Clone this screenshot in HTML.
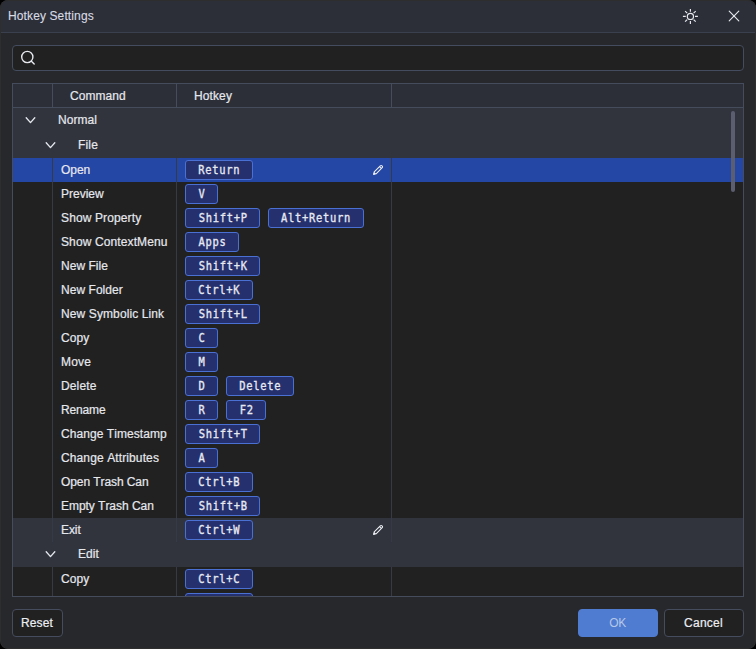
<!DOCTYPE html>
<html><head><meta charset="utf-8"><title>Hotkey Settings</title>
<style>
html,body{margin:0;padding:0;background:#000;}
body{width:756px;height:649px;overflow:hidden;font-family:"Liberation Sans",sans-serif;font-size:12px;color:#e6e8ee;font-kerning:none;-webkit-text-stroke:0.2px;}
#win{position:absolute;left:0;top:0;width:756px;height:649px;background:#27282c;border-radius:8px;overflow:hidden;box-sizing:border-box;}
#lb{position:absolute;left:0;top:0;width:756px;height:649px;box-sizing:border-box;border:1px solid #2e2e2e;border-radius:8px;}
#tb{position:absolute;left:0;top:0;width:756px;height:32px;background:#2c2f37;border-bottom:1px solid #3a404e;}
#title{position:absolute;left:8px;top:9px;line-height:14px;color:#d8dbe4;-webkit-text-stroke:0.1px;}
#sun{position:absolute;left:680px;top:6px;}
#cls{position:absolute;left:724px;top:6px;}
#search{position:absolute;left:12px;top:45px;width:732px;height:26px;box-sizing:border-box;border:1px solid #444d5f;border-radius:4px;background:#212121;}
#search svg{position:absolute;left:6px;top:3px;}
#tbl{position:absolute;left:12px;top:83px;width:732px;height:514px;box-sizing:border-box;border:1px solid #454c5c;background:#212121;overflow:hidden;}
#hd{position:absolute;left:0;top:0;width:730px;height:23px;background:#2c2f37;border-bottom:1px solid #454c5c;}
#hd div{position:absolute;top:0;height:23px;line-height:25px;box-sizing:border-box;border-right:1px solid #454c5c;padding-left:17px;}
#rows{position:absolute;left:0;top:24px;width:730px;}
.r{position:relative;width:730px;height:24px;line-height:24px;white-space:nowrap;}
.g{height:25px;background:#31343d;}
.g span{position:absolute;top:0;}
.g0 span{left:45px;}
.g1 span{left:65px;}
.chev{position:absolute;top:8px;}
.g0 .chev{left:12px;}
.g1 .chev{left:32px;}
.it div{position:absolute;top:0;height:24px;box-sizing:border-box;}
.c0{left:0;width:40px;border-right:1px solid #363a47;}
.c1{left:40px;width:124px;border-right:1px solid #363a47;padding-left:8px;}
.c2{left:164px;width:215px;border-right:1px solid #363a47;padding-left:8px;}
.c3{left:379px;width:351px;}
.sel{background:#2446a4;}
.hov{background:#31343d;}
.k{display:inline-block;vertical-align:top;margin:2px 8px 0 0;height:20px;line-height:18px;box-sizing:border-box;border:1px solid #4a70d4;border-radius:3px;background:#25306e;padding:0 12px;font-family:"DejaVu Sans Mono","Liberation Mono",monospace;font-size:11.6px;color:#e8eaf2;}
.k b{display:inline-block;font-weight:normal;transform:scaleX(0.9);transform-origin:50% 50%;letter-spacing:0.8px;-webkit-text-stroke:0.32px;}
.pen{position:absolute;left:195px;top:6px;}
#sb{position:absolute;left:718px;top:27px;width:4px;height:81px;border-radius:2px;background:#5a5e6f;}
.btn{position:absolute;top:609px;height:28px;line-height:26px;box-sizing:border-box;border:1px solid #454c5e;border-radius:4px;background:#212121;text-align:center;color:#eceef3;padding-right:1px;}
#reset{left:12px;width:51px;}
#ok{left:578px;width:80px;background:#4f7bd0;border-color:#4f7bd0;color:#b4c8e8;-webkit-text-stroke:0;}
#cancel{left:664px;width:80px;}
</style></head><body>
<div id="win">
<div id="tb"><div id="title"><span class="t" style="letter-spacing:0.117px">Hotkey Settings</span></div>
<svg id="sun" width="21" height="21" viewBox="0 0 21 21"><g fill="none" stroke="#e6e8ee" stroke-width="1.2"><circle cx="10.4" cy="10.4" r="3.1"/><path d="M10.4 2.9v2.9M10.4 15V17.9M2.9 10.4h2.9M15 10.4H17.9M5.1 5.1l2.1 2.1M13.6 13.6l2.1 2.1M15.7 5.1l-2.1 2.1M7.2 13.6l-2.1 2.1"/></g></svg>
<svg id="cls" width="20" height="20" viewBox="0 0 20 20"><path d="M5.2 5.2L14.8 14.8M14.8 5.2L5.2 14.8" fill="none" stroke="#e6e8ee" stroke-width="1.15" stroke-linecap="round"/></svg>
</div>
<div id="search"><svg width="20" height="20" viewBox="0 0 20 20"><g fill="none" stroke="#e6e8ee" stroke-width="1.4" stroke-linecap="round"><circle cx="8.3" cy="8" r="5.6"/><path d="M12.4 12.2L15.2 15"/></g></svg></div>
<div id="tbl">
<div id="hd"><div style="left:0;width:40px"></div><div style="left:40px;width:124px"><span class="t" style="letter-spacing:0.035px">Command</span></div><div style="left:164px;width:215px"><span class="t" style="letter-spacing:0.109px">Hotkey</span></div></div>
<div id="rows">
<div class="r g g0"><svg class="chev" width="12" height="8" viewBox="0 0 12 8"><path d="M1.2 1.7 L5.5 6.6 L9.8 1.7" fill="none" stroke="#e4e6ec" stroke-width="1.35" stroke-linecap="round" stroke-linejoin="round"/></svg><span class="t" style="letter-spacing:0.071px">Normal</span></div>
<div class="r g g1"><svg class="chev" width="12" height="8" viewBox="0 0 12 8"><path d="M1.2 1.7 L5.5 6.6 L9.8 1.7" fill="none" stroke="#e4e6ec" stroke-width="1.35" stroke-linecap="round" stroke-linejoin="round"/></svg><span class="t" style="letter-spacing:0.166px">File</span></div>
<div class="r it sel"><div class="c0"></div><div class="c1"><span class="t" style="letter-spacing:-0.039px">Open</span></div><div class="c2"><span class="k"><b style="margin:0 -2.71px 0 -1.99px">Return</b></span><svg class="pen" width="12" height="12" viewBox="0 0 12 12"><path d="M1.6 10.4 L2.2 7.9 L8.3 1.8 a1.2 1.2 0 0 1 1.7 0 l0.2 0.2 a1.2 1.2 0 0 1 0 1.7 L4.1 9.8 Z M7.5 2.6 L9.4 4.5" fill="none" stroke="#eef0f5" stroke-width="1.05" stroke-linejoin="round" stroke-linecap="round"/><path d="M1.5 10.5 L2.2 7.9 L4.1 9.8 Z" fill="#eef0f5"/></svg></div><div class="c3"></div></div>
<div class="r it "><div class="c0"></div><div class="c1"><span class="t" style="letter-spacing:0.003px">Preview</span></div><div class="c2"><span class="k"><b style="margin:0 -0.75px 0 -0.03px">V</b></span></div><div class="c3"></div></div>
<div class="r it "><div class="c0"></div><div class="c1"><span class="t" style="letter-spacing:0.123px">Show Property</span></div><div class="c2"><span class="k"><b style="margin:0 -3.10px 0 -2.38px">Shift+P</b></span><span class="k"><b style="margin:0 -4.28px 0 -3.56px">Alt+Return</b></span></div><div class="c3"></div></div>
<div class="r it "><div class="c0"></div><div class="c1"><span class="t" style="letter-spacing:0.117px">Show ContextMenu</span></div><div class="c2"><span class="k"><b style="margin:0 -1.93px 0 -1.21px">Apps</b></span></div><div class="c3"></div></div>
<div class="r it "><div class="c0"></div><div class="c1"><span class="t" style="letter-spacing:0.041px">New File</span></div><div class="c2"><span class="k"><b style="margin:0 -3.10px 0 -2.38px">Shift+K</b></span></div><div class="c3"></div></div>
<div class="r it "><div class="c0"></div><div class="c1"><span class="t" style="letter-spacing:0.045px">New Folder</span></div><div class="c2"><span class="k"><b style="margin:0 -2.71px 0 -1.99px">Ctrl+K</b></span></div><div class="c3"></div></div>
<div class="r it "><div class="c0"></div><div class="c1"><span class="t" style="letter-spacing:0.108px">New Symbolic Link</span></div><div class="c2"><span class="k"><b style="margin:0 -3.10px 0 -2.38px">Shift+L</b></span></div><div class="c3"></div></div>
<div class="r it "><div class="c0"></div><div class="c1"><span class="t" style="letter-spacing:0.072px">Copy</span></div><div class="c2"><span class="k"><b style="margin:0 -0.75px 0 -0.03px">C</b></span></div><div class="c3"></div></div>
<div class="r it "><div class="c0"></div><div class="c1"><span class="t" style="letter-spacing:0.164px">Move</span></div><div class="c2"><span class="k"><b style="margin:0 -0.75px 0 -0.03px">M</b></span></div><div class="c3"></div></div>
<div class="r it "><div class="c0"></div><div class="c1"><span class="t" style="letter-spacing:0.135px">Delete</span></div><div class="c2"><span class="k"><b style="margin:0 -0.75px 0 -0.03px">D</b></span><span class="k"><b style="margin:0 -2.71px 0 -1.99px">Delete</b></span></div><div class="c3"></div></div>
<div class="r it "><div class="c0"></div><div class="c1"><span class="t" style="letter-spacing:-0.143px">Rename</span></div><div class="c2"><span class="k"><b style="margin:0 -0.75px 0 -0.03px">R</b></span><span class="k"><b style="margin:0 -1.14px 0 -0.42px">F2</b></span></div><div class="c3"></div></div>
<div class="r it "><div class="c0"></div><div class="c1"><span class="t" style="letter-spacing:0.068px">Change Timestamp</span></div><div class="c2"><span class="k"><b style="margin:0 -3.10px 0 -2.38px">Shift+T</b></span></div><div class="c3"></div></div>
<div class="r it "><div class="c0"></div><div class="c1"><span class="t" style="letter-spacing:0.114px">Change Attributes</span></div><div class="c2"><span class="k"><b style="margin:0 -0.75px 0 -0.03px">A</b></span></div><div class="c3"></div></div>
<div class="r it "><div class="c0"></div><div class="c1"><span class="t" style="letter-spacing:-0.086px">Open Trash Can</span></div><div class="c2"><span class="k"><b style="margin:0 -2.71px 0 -1.99px">Ctrl+B</b></span></div><div class="c3"></div></div>
<div class="r it "><div class="c0"></div><div class="c1"><span class="t" style="letter-spacing:-0.038px">Empty Trash Can</span></div><div class="c2"><span class="k"><b style="margin:0 -3.10px 0 -2.38px">Shift+B</b></span></div><div class="c3"></div></div>
<div class="r it hov"><div class="c0"></div><div class="c1"><span class="t" style="letter-spacing:-0.076px">Exit</span></div><div class="c2"><span class="k"><b style="margin:0 -2.71px 0 -1.99px">Ctrl+W</b></span><svg class="pen" width="12" height="12" viewBox="0 0 12 12"><path d="M1.6 10.4 L2.2 7.9 L8.3 1.8 a1.2 1.2 0 0 1 1.7 0 l0.2 0.2 a1.2 1.2 0 0 1 0 1.7 L4.1 9.8 Z M7.5 2.6 L9.4 4.5" fill="none" stroke="#eef0f5" stroke-width="1.05" stroke-linejoin="round" stroke-linecap="round"/><path d="M1.5 10.5 L2.2 7.9 L4.1 9.8 Z" fill="#eef0f5"/></svg></div><div class="c3"></div></div>
<div class="r g g1"><svg class="chev" width="12" height="8" viewBox="0 0 12 8"><path d="M1.2 1.7 L5.5 6.6 L9.8 1.7" fill="none" stroke="#e4e6ec" stroke-width="1.35" stroke-linecap="round" stroke-linejoin="round"/></svg><span class="t" style="letter-spacing:0.081px">Edit</span></div>
<div class="r it "><div class="c0"></div><div class="c1"><span class="t" style="letter-spacing:0.072px">Copy</span></div><div class="c2"><span class="k"><b style="margin:0 -2.71px 0 -1.99px">Ctrl+C</b></span></div><div class="c3"></div></div>
<div class="r it "><div class="c0"></div><div class="c1"><span class="t" style="letter-spacing:0.109px">Cut</span></div><div class="c2"><span class="k"><b style="margin:0 -2.71px 0 -1.99px">Ctrl+X</b></span></div><div class="c3"></div></div>
</div>
<div id="sb"></div>
</div>
<div class="btn" id="reset"><span class="t" style="letter-spacing:0.130px">Reset</span></div>
<div class="btn" id="ok"><span class="t" style="letter-spacing:-0.419px">OK</span></div>
<div class="btn" id="cancel"><span class="t" style="letter-spacing:0.274px">Cancel</span></div>
<div id="lb"></div>
</div>
</body></html>
